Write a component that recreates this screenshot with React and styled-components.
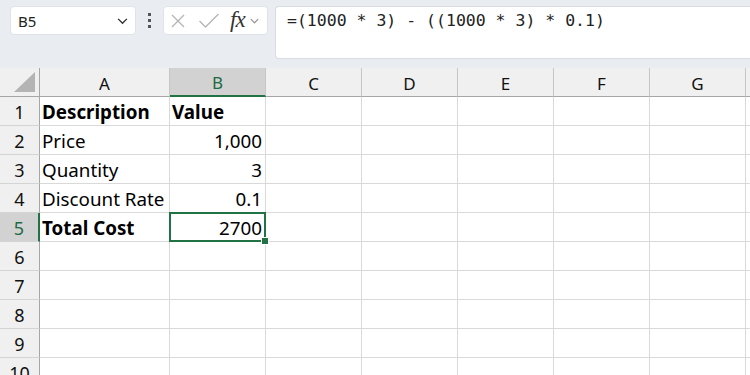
import { Fragment } from 'react';
import styled, { createGlobalStyle } from 'styled-components';

const GlobalStyle = createGlobalStyle`
  html, body {
    margin: 0;
    padding: 0;
    background: #ffffff;
    overflow: hidden;
  }
`;

const Page = styled.div`
  width: 750px;
  height: 375px;
  overflow: hidden;
  font-family: 'Noto Sans', 'Liberation Sans', sans-serif;
  background: #ffffff;
`;

const Toolbar = styled.div`
  height: 68px;
  display: flex;
  align-items: flex-start;
  padding: 6px 0 0 10px;
  box-sizing: border-box;
  background: #e9edf1;
`;

const NameBox = styled.div`
  width: 126px;
  height: 29px;
  box-sizing: border-box;
  display: flex;
  align-items: center;
  justify-content: space-between;
  padding: 0 6px 0 7px;
  border: 1px solid #dfe3e8;
  border-radius: 4px;
  background: #ffffff;
  font-family: 'Noto Sans', sans-serif;
  font-size: 15px;
  color: #222;
`;

const Dots = styled.div`
  width: 27px;
  height: 29px;
  display: flex;
  flex-direction: column;
  align-items: center;
  justify-content: center;
  gap: 3px;

  span {
    width: 3px;
    height: 3px;
    background: #555;
  }
`;

const FxBox = styled.div`
  width: 105px;
  height: 29px;
  box-sizing: border-box;
  display: flex;
  align-items: center;
  padding: 0 3px 0 6px;
  border: 1px solid #dfe3e8;
  border-radius: 4px;
  background: #ffffff;
`;

const Fx = styled.span`
  font-family: 'Liberation Serif', serif;
  font-style: italic;
  font-size: 23px;
  line-height: 1;
  color: #333;
  margin: 0 4px 3px 10px;
  letter-spacing: -1px;
`;

const FormulaBox = styled.div`
  flex: 1;
  height: 53px;
  margin-left: 7px;
  box-sizing: border-box;
  padding: 4px 0 0 11px;
  border: 1px solid #d8dce1;
  border-right: none;
  border-radius: 4px 0 0 4px;
  background: #ffffff;
  font-family: 'DejaVu Sans Mono', 'Liberation Mono', monospace;
  font-size: 16.5px;
  color: #222;
  white-space: pre;
`;

const Sheet = styled.div`
  display: grid;
  grid-template-columns: 40px 130px repeat(7, 96px);
  grid-auto-rows: 29px;
`;

const ColHead = styled.div`
  box-sizing: border-box;
  display: flex;
  align-items: center;
  justify-content: center;
  padding-top: 2px;
  background: ${(p) => (p.$active ? '#d2d2d2' : '#f0f0f0')};
  border-right: 1px solid #c6c6c6;
  border-bottom: ${(p) => (p.$active ? '2px solid #217346' : '1px solid #a6a6a6')};
  font-size: 17px;
  color: ${(p) => (p.$active ? '#1e6b41' : '#111')};
`;

const Corner = styled.div`
  box-sizing: border-box;
  display: flex;
  align-items: flex-end;
  justify-content: flex-end;
  padding: 0 4px 4px 0;
  background: #f0f0f0;
  border-right: 1px solid #a6a6a6;
  border-bottom: 1px solid #a6a6a6;
`;

const RowHead = styled.div`
  box-sizing: border-box;
  display: flex;
  align-items: center;
  justify-content: center;
  padding-top: 1px;
  background: ${(p) => (p.$active ? '#d2d2d2' : '#f0f0f0')};
  border-right: ${(p) => (p.$active ? '2px solid #217346' : '1px solid #a6a6a6')};
  border-bottom: 1px solid #d4d4d4;
  font-size: 18px;
  color: ${(p) => (p.$active ? '#1e6b41' : '#111')};
`;

const Cell = styled.div`
  position: relative;
  z-index: ${(p) => (p.$selected ? 2 : 'auto')};
  box-sizing: border-box;
  display: flex;
  align-items: center;
  justify-content: ${(p) => (p.$right ? 'flex-end' : 'flex-start')};
  padding: 1px 3px 0 2px;
  border-right: 1px solid #d9d9d9;
  border-bottom: 1px solid #d9d9d9;
  font-family: 'Noto Sans', 'Liberation Sans', sans-serif;
  font-size: 18.8px;
  font-weight: ${(p) => (p.$bold ? 700 : 400)};
  color: #000;
  white-space: nowrap;
`;

const Selection = styled.div`
  position: absolute;
  left: -1px;
  top: -1px;
  right: -1px;
  bottom: -1px;
  border: 2px solid #217346;
  pointer-events: none;

  &::after {
    content: '';
    position: absolute;
    right: -5px;
    bottom: -5px;
    width: 6px;
    height: 6px;
    background: #217346;
    border: 1px solid #fff;
  }
`;

const Chevron = ({ size = 12, color = '#444' }) => (
  <svg width={size} height={size} viewBox="0 0 12 12">
    <path d="M2 4.5 L6 8.5 L10 4.5" fill="none" stroke={color} strokeWidth="1.3" />
  </svg>
);

const columns = ['A', 'B', 'C', 'D', 'E', 'F', 'G', ''];

const data = [
  [{ v: 'Description', bold: true }, { v: 'Value', bold: true }],
  [{ v: 'Price' }, { v: '1,000', right: true }],
  [{ v: 'Quantity' }, { v: '3', right: true }],
  [{ v: 'Discount Rate' }, { v: '0.1', right: true }],
  [{ v: 'Total Cost', bold: true }, { v: '2700', right: true, selected: true }],
  [], [], [], [], [],
];

const App = () => {
  return (
    <Page>
      <GlobalStyle />
      <Toolbar>
        <NameBox>
          <span>B5</span>
          <Chevron size={13} color="#333" />
        </NameBox>
        <Dots>
          <span />
          <span />
          <span />
        </Dots>
        <FxBox>
          <svg width="16" height="16" viewBox="0 0 16 16">
            <path d="M2 2 L14 14 M14 2 L2 14" stroke="#b4b4b4" strokeWidth="1.3" />
          </svg>
          <svg width="22" height="18" viewBox="0 0 22 18" style={{ marginLeft: 12 }}>
            <path d="M1.5 9 L7.5 15 L20.5 2" fill="none" stroke="#b4b4b4" strokeWidth="1.3" />
          </svg>
          <Fx>fx</Fx>
          <Chevron size={11} color="#999" />
        </FxBox>
        <FormulaBox>=(1000 * 3) - ((1000 * 3) * 0.1)</FormulaBox>
      </Toolbar>

      <Sheet>
        <Corner>
          <svg width="21" height="20" viewBox="0 0 21 20">
            <path d="M21 0 L21 20 L0 20 Z" fill="#b4b4b4" />
          </svg>
        </Corner>
        {columns.map((c, i) => (
          <ColHead key={i} $active={c === 'B'}>
            {c}
          </ColHead>
        ))}
        {data.map((row, r) => (
          <Fragment key={r}>
            <RowHead $active={r === 4}>{r + 1}</RowHead>
            {columns.map((_, c) => {
              const cell = row[c];
              return (
                <Cell
                  key={c}
                  $bold={cell?.bold}
                  $right={cell?.right}
                  $selected={cell?.selected}
                >
                  {cell?.v}
                  {cell?.selected && <Selection />}
                </Cell>
              );
            })}
          </Fragment>
        ))}
      </Sheet>
    </Page>
  );
};

export default App;
